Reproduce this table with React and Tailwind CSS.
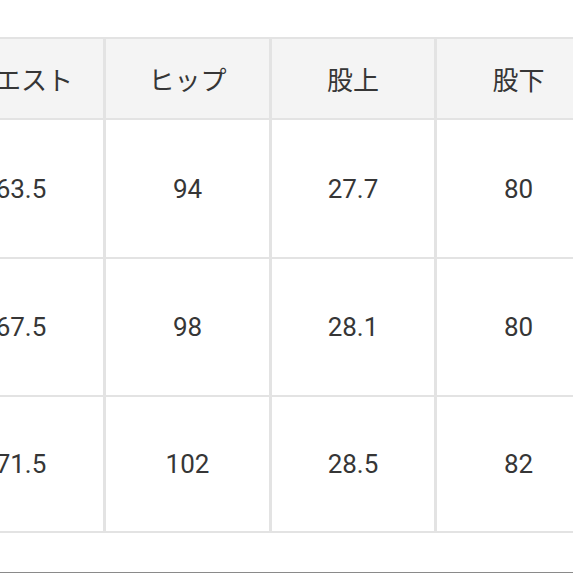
import React from "react";

const headers = ["ウエスト", "ヒップ", "股上", "股下"];
const rows = [
  { id: 1, h: "h-[137px]", cells: ["63.5", "94", "27.7", "80"] },
  { id: 2, h: "h-[136px]", cells: ["67.5", "98", "28.1", "80"] },
  { id: 3, h: "h-[134px]", cells: ["71.5", "102", "28.5", "82"] },
];

const SizeTable = () => {
  return (
    <div className="w-[573px] h-[573px] overflow-hidden bg-white relative font-['Roboto','Noto_Sans_CJK_JP',sans-serif] text-[#363636]">
      <div className="mt-[37px] ml-[-64px] w-[700px] bg-[#e3e3e3] py-[2px] flex flex-col gap-y-[2px]">
        <div className="grid grid-cols-[164px_163px_162px_163px_100px] gap-x-[3px] pl-[3px] h-[79px]">
          {headers.map((h) => (
            <div key={h} className="bg-[#f4f4f4] flex items-center justify-center text-[26px] font-['Noto_Sans_CJK_JP',sans-serif]">
              {h}
            </div>
          ))}
          <div className="bg-[#f4f4f4]" />
        </div>
        {rows.map((row) => (
          <div
            key={row.id}
            className={`grid grid-cols-[164px_163px_162px_163px_100px] gap-x-[3px] pl-[3px] ${row.h}`}
          >
            {row.cells.map((c, i) => (
              <div key={i} className="bg-white flex items-center justify-center text-[26px] pt-[1px]">
                {c}
              </div>
            ))}
            <div className="bg-white" />
          </div>
        ))}
      </div>
      <div className="absolute left-0 right-0 bottom-0 h-px bg-[#8a8a8a]" />
    </div>
  );
};

export default function App() {
  return <SizeTable />;
}
